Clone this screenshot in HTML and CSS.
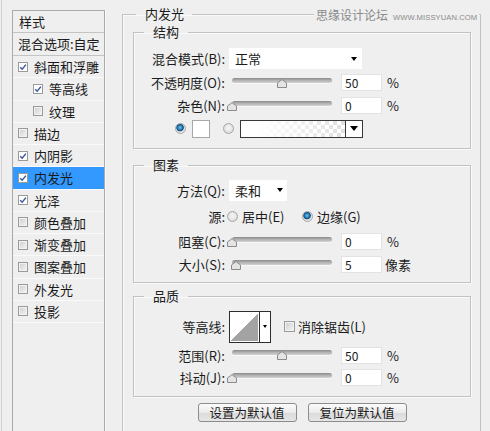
FILE: index.html
```html
<!DOCTYPE html>
<html lang="zh">
<head>
<meta charset="utf-8">
<title>内发光</title>
<link rel="stylesheet" href="styles.css">
</head>
<body>
<div class="page">
  <div class="styles-list">
    <div class="list-head first">样式</div>
    <div class="list-head">混合选项:自定</div>
    <div class="item"><span class="cb on"><svg viewBox="0 0 8 8"><path d="M1.2 4.2 3.2 6.2 6.9 1.6"/></svg></span>斜面和浮雕</div>
    <div class="item sub"><span class="cb on"><svg viewBox="0 0 8 8"><path d="M1.2 4.2 3.2 6.2 6.9 1.6"/></svg></span>等高线</div>
    <div class="item sub"><span class="cb"></span>纹理</div>
    <div class="item"><span class="cb"></span>描边</div>
    <div class="item"><span class="cb on"><svg viewBox="0 0 8 8"><path d="M1.2 4.2 3.2 6.2 6.9 1.6"/></svg></span>内阴影</div>
    <div class="item selected"><span class="cb on"><svg viewBox="0 0 8 8"><path d="M1.2 4.2 3.2 6.2 6.9 1.6"/></svg></span>内发光</div>
    <div class="item"><span class="cb on"><svg viewBox="0 0 8 8"><path d="M1.2 4.2 3.2 6.2 6.9 1.6"/></svg></span>光泽</div>
    <div class="item"><span class="cb"></span>颜色叠加</div>
    <div class="item"><span class="cb"></span>渐变叠加</div>
    <div class="item"><span class="cb"></span>图案叠加</div>
    <div class="item"><span class="cb"></span>外发光</div>
    <div class="item"><span class="cb"></span>投影</div>
  </div>

  <fieldset class="outer">
    <legend>内发光</legend>

    <fieldset class="group g-struct">
      <legend>结构</legend>
      <div class="row r25">
        <span class="lbl">混合模式(B):</span>
        <div class="select wide">正常<span class="arrow"></span></div>
      </div>
      <div class="row">
        <span class="lbl">不透明度(O):</span>
        <div class="slider"><div class="track"></div><svg class="thumb" style="left:50%" viewBox="0 0 10 9"><path d="M.5 8.5V4L5 .6 9.5 4v4.5z"/></svg></div>
        <div class="num">50</div><span class="unit">%</span>
      </div>
      <div class="row">
        <span class="lbl">杂色(N):</span>
        <div class="slider"><div class="track"></div><svg class="thumb" style="left:0%" viewBox="0 0 10 9"><path d="M.5 8.5V4L5 .6 9.5 4v4.5z"/></svg></div>
        <div class="num">0</div><span class="unit">%</span>
      </div>
      <div class="row colors">
        <span class="radio on"></span>
        <span class="swatch"></span>
        <span class="radio r2"></span>
        <div class="gradient"><span class="grad-fill"></span><span class="grad-btn"><span class="arrow big"></span></span></div>
      </div>
    </fieldset>

    <fieldset class="group g-elem">
      <legend>图素</legend>
      <div class="row r24">
        <span class="lbl">方法(Q):</span>
        <div class="select short">柔和<span class="arrow"></span></div>
      </div>
      <div class="row r28">
        <span class="lbl">源:</span>
        <span class="opt o1"><span class="radio"></span>居中(E)</span>
        <span class="opt"><span class="radio on"></span>边缘(G)</span>
      </div>
      <div class="row">
        <span class="lbl">阻塞(C):</span>
        <div class="slider"><div class="track"></div><svg class="thumb" style="left:0%" viewBox="0 0 10 9"><path d="M.5 8.5V4L5 .6 9.5 4v4.5z"/></svg></div>
        <div class="num">0</div><span class="unit">%</span>
      </div>
      <div class="row">
        <span class="lbl">大小(S):</span>
        <div class="slider"><div class="track"></div><svg class="thumb" style="left:4%" viewBox="0 0 10 9"><path d="M.5 8.5V4L5 .6 9.5 4v4.5z"/></svg></div>
        <div class="num">5</div><span class="unit px">像素</span>
      </div>
    </fieldset>

    <fieldset class="group g-qual">
      <legend>品质</legend>
      <div class="row r35">
        <span class="lbl">等高线:</span>
        <div class="contour"><span class="curve"></span><span class="curve-btn"><span class="arrow tiny"></span></span></div>
        <span class="cb plain"></span><span class="cb-text">消除锯齿(L)</span>
      </div>
      <div class="row r22">
        <span class="lbl">范围(R):</span>
        <div class="slider"><div class="track"></div><svg class="thumb" style="left:50%" viewBox="0 0 10 9"><path d="M.5 8.5V4L5 .6 9.5 4v4.5z"/></svg></div>
        <div class="num">50</div><span class="unit">%</span>
      </div>
      <div class="row">
        <span class="lbl">抖动(J):</span>
        <div class="slider"><div class="track"></div><svg class="thumb" style="left:0%" viewBox="0 0 10 9"><path d="M.5 8.5V4L5 .6 9.5 4v4.5z"/></svg></div>
        <div class="num">0</div><span class="unit">%</span>
      </div>
    </fieldset>

    <div class="btns">
      <button class="btn" type="button">设置为默认值</button>
      <button class="btn" type="button">复位为默认值</button>
    </div>
  </fieldset>

  <div class="watermark">思缘设计论坛<span class="wm-url">WWW.MISSYUAN.COM</span></div>
</div>
</body>
</html>
```

FILE: styles.css
```css
* { box-sizing: border-box; }

html, body {
  margin: 0;
  padding: 0;
}

body {
  width: 490px;
  height: 431px;
  overflow: hidden;
  background: linear-gradient(to right, #efefef 1px, #d0d0d0 1px, #d0d0d0 2px, #efefef 2px);
  font-family: "Noto Sans CJK SC", "Liberation Sans", sans-serif;
  font-size: 13px;
  color: #1b1b1b;
}

.page {
  position: relative;
  display: flex;
  align-items: flex-start;
  padding: 6px 0 0 12px;
  height: 431px;
}

/* ---------- left style list ---------- */
.styles-list {
  flex: none;
  width: 93px;
  height: 440px;
  margin-top: 4px;
  border: 1px solid #a9a9a9;
  box-shadow: 1px 0 0 #fafafa;
  background: #efefef;
}

.list-head {
  height: 23px;
  line-height: 22px;
  padding-left: 5px;
  border-bottom: 1px solid #c4c4c4;
}

.list-head.first {
  height: 22px;
  line-height: 21px;
  padding-left: 6px;
}

.item {
  display: flex;
  align-items: center;
  gap: 6px;
  height: 22.25px;
  padding-left: 5px;
  border-bottom: 1px solid #fafafa;
}

.item.sub { padding-left: 20px; }

.item.selected { background: #3399ff; }

.cb {
  flex: none;
  position: relative;
  width: 10px;
  height: 10px;
  border: 1px solid #9a9a9a;
  background: linear-gradient(135deg, #cdcdcd, #f6f6f6);
  box-shadow: inset 0 0 0 1px #f2f2f2;
}

.cb.on {
  background: #fff;
  box-shadow: none;
}

.cb svg {
  position: absolute;
  left: 0;
  top: 0;
  width: 8px;
  height: 8px;
}

.cb svg path {
  fill: none;
  stroke: #3d5a99;
  stroke-width: 1.5;
}

/* ---------- right panel ---------- */
fieldset {
  min-width: 0;
  margin: 0;
}

legend {
  height: 16px;
  line-height: 16px;
}

.outer {
  flex: none;
  width: 359px;
  height: 440px;
  margin-left: 17px;
  padding: 0 9px 0 10px;
  border: 1px solid #c2c2c2;
  box-shadow: inset 1px 1px 0 #fafafa;
}

.outer > legend {
  margin-left: 3px;
  padding: 0 8px 0 9px;
}

.group {
  border: 1px solid #c2c2c2;
  box-shadow: inset 1px 1px 0 #fafafa, 1px 1px 0 #fafafa;
}

.group > legend {
  margin-left: 10px;
  padding: 0 9px;
}

.g-struct { margin-top: 2px; padding: 6px 0 8px; }
.g-elem { margin-top: 8px; padding: 5px 0 6px; }
.g-qual { margin-top: 5px; padding: 5px 0 7px; }

.row {
  display: flex;
  align-items: center;
  height: 23px;
}

.row.r22 { height: 22px; }
.row.r24 { height: 24px; }
.row.r25 { height: 25px; }
.row.r28 { height: 28px; }
.row.r35 { height: 35px; }

.lbl {
  flex: none;
  width: 91px;
  text-align: right;
  white-space: nowrap;
}

.select {
  display: flex;
  align-items: center;
  height: 21px;
  margin-left: 4px;
  padding-left: 6px;
  background: #fff;
}

.select.wide { width: 133px; }
.select.short { width: 58px; }

.arrow {
  margin-left: auto;
  margin-right: 5px;
  width: 0;
  height: 0;
  border-left: 3.5px solid transparent;
  border-right: 3.5px solid transparent;
  border-top: 4px solid #000;
}

.select.short .arrow { margin-right: 4px; }

.slider {
  flex: none;
  position: relative;
  width: 100px;
  height: 10px;
  margin-left: 7px;
}

.track {
  height: 5px;
  border-radius: 3px;
  background: linear-gradient(#8a8a8a, #b4b4b4 50%, #d2d2d2);
  box-shadow: 0 1px 0 #f8f8f8;
}

.thumb {
  position: absolute;
  top: 1px;
  width: 10px;
  height: 9px;
  margin-left: -5px;
}

.thumb path {
  fill: #e4e4e4;
  stroke: #8a8a8a;
  stroke-width: 1;
}

.num {
  flex: none;
  width: 41px;
  height: 17px;
  margin-left: 9px;
  padding-left: 3px;
  background: #fff;
  border: 1px solid #e3e3e3;
  font-size: 12px;
  line-height: 15px;
}

.unit { margin-left: 5px; }
.unit.px { margin-left: 3px; }

/* colour row */
.row.colors { padding-left: 41px; }

.radio {
  flex: none;
  width: 11px;
  height: 11px;
  border-radius: 50%;
  border: 1px solid #a6a6a6;
  background: radial-gradient(circle at 50% 45%, #f8f8f8 0, #e2e2e2 60%, #cfcfcf 100%);
}

.radio.on {
  background: radial-gradient(circle at 45% 40%, #7cc8f0 0, #1f77b4 32%, #0e4c7c 46%, #dcdcdc 56%, #f4f4f4 80%);
}

.swatch {
  flex: none;
  width: 18px;
  height: 18px;
  margin-left: 6px;
  background: #fff;
  border: 1px solid #a8a8a8;
}

.radio.r2 { margin-left: 13px; }

.gradient {
  flex: none;
  display: flex;
  width: 123px;
  height: 18px;
  margin-left: 6px;
  border: 1px solid #383838;
  background: #fff;
}

.grad-fill {
  flex: 1;
  background:
    linear-gradient(to right, #fff 15%, rgba(255, 255, 255, 0.1) 100%),
    repeating-conic-gradient(#dcdcdc 0 25%, #fff 0 50%) 0 0 / 8px 8px;
}

.grad-btn {
  flex: none;
  display: flex;
  align-items: center;
  justify-content: center;
  width: 17px;
  border-left: 1px solid #383838;
  background: #fff;
}

.arrow.big {
  margin: 0;
  border-left-width: 4px;
  border-right-width: 4px;
  border-top-width: 5px;
}

/* source row */
.opt {
  display: flex;
  align-items: center;
  gap: 4px;
}

.opt.o1 {
  width: 75px;
  margin-left: 2px;
}

/* contour */
.contour {
  flex: none;
  display: flex;
  width: 42px;
  height: 32px;
  margin-left: 4px;
  border: 1px solid #2e2e2e;
  background: #fff;
}

.curve {
  flex: 1;
  padding: 1px;
  background: linear-gradient(to bottom right, #fff 50%, #a3a3a3 50%) content-box;
}

.curve-btn {
  flex: none;
  display: flex;
  align-items: center;
  justify-content: center;
  width: 11px;
  border-left: 1px solid #2e2e2e;
}

.arrow.tiny {
  margin: 0;
  border-left-width: 2.5px;
  border-right-width: 2.5px;
  border-top-width: 3px;
}

.cb.plain {
  width: 11px;
  height: 11px;
  margin-left: 13px;
}

.cb-text { margin-left: 3px; }

/* buttons */
.btns {
  display: flex;
  justify-content: center;
  gap: 11px;
  margin-top: 6px;
}

.btn {
  width: 99px;
  height: 19px;
  padding: 0;
  border: 1px solid #8c8c8c;
  border-radius: 3px;
  background: linear-gradient(#fbfbfb, #ebebeb 50%, #dadada 51%, #e6e6e6);
  font-family: "Noto Sans CJK SC", "Liberation Sans", sans-serif;
  font-size: 12.5px;
  line-height: 17px;
  color: #1b1b1b;
}

/* watermark */
.watermark {
  position: absolute;
  top: 7px;
  left: 314px;
  padding: 0 2px;
  background: #efefef;
  color: #8a8a8a;
  font-size: 12px;
  line-height: 15px;
  white-space: nowrap;
}

.wm-url {
  margin-left: 5px;
  font-family: "Liberation Sans", sans-serif;
  font-size: 7.6px;
  letter-spacing: 0.1px;
}
```
